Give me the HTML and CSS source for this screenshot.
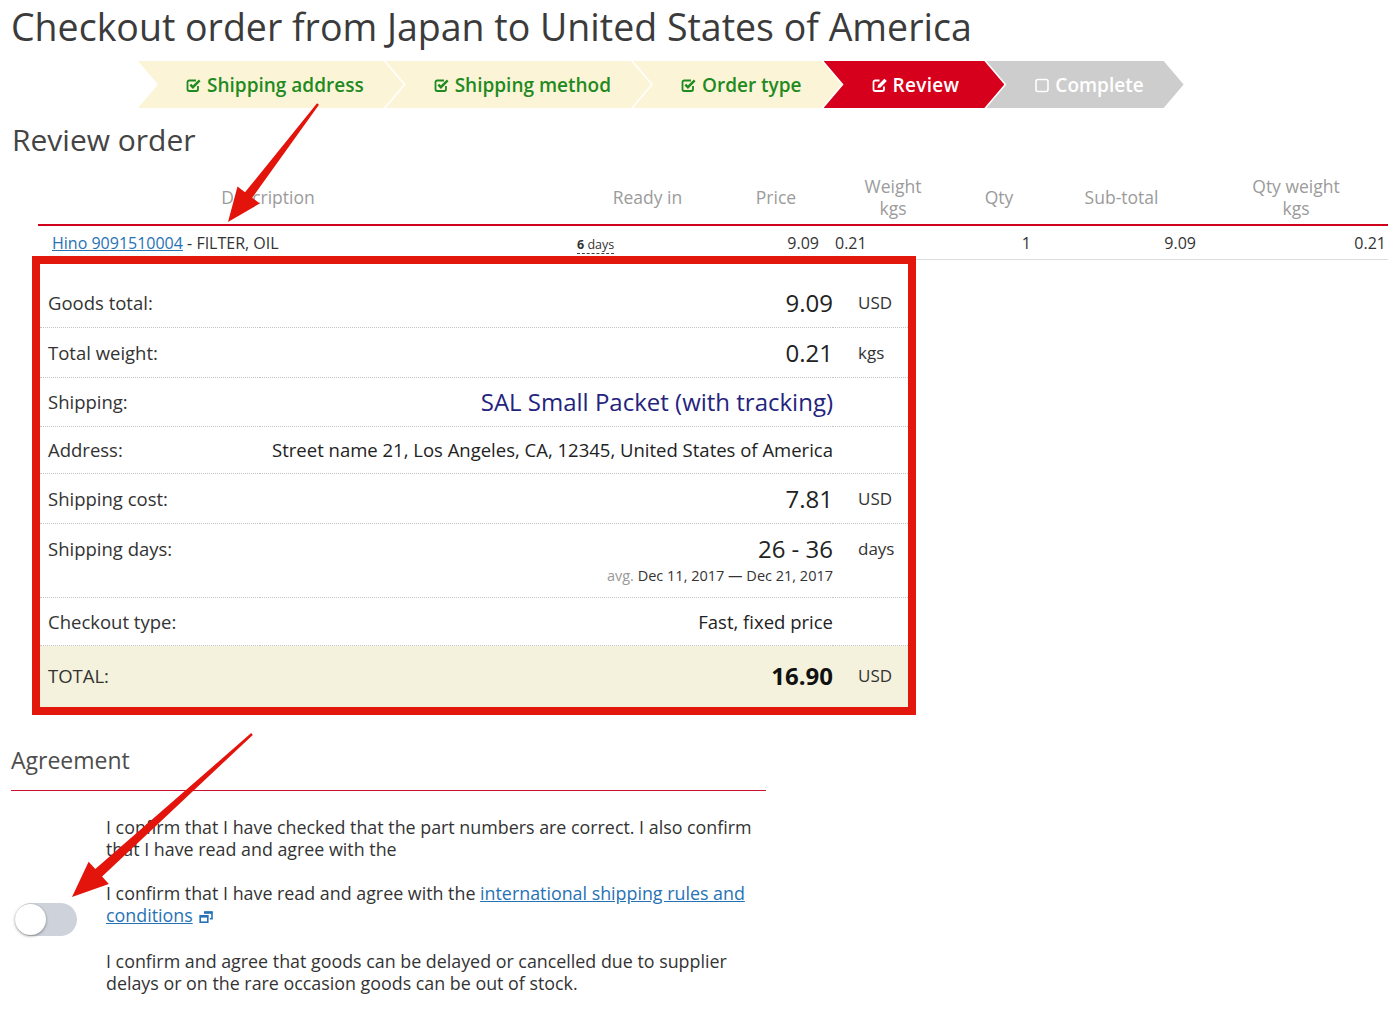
FILE: index.html
```html
<!DOCTYPE html>
<html lang="en">
<head>
<meta charset="utf-8">
<title>Checkout order</title>
<link rel="stylesheet" href="styles.css">
</head>
<body>
<div class="page">
  <h1 class="title">Checkout order from Japan to United States of America</h1>

  <ol class="steps">
    <li class="step done">
      <svg class="ico" viewBox="0 0 16 16" width="16" height="16"><path d="M12 9v3.3A1.7 1.7 0 0 1 10.3 14H3.2A1.7 1.7 0 0 1 1.5 12.3V5.2A1.7 1.7 0 0 1 3.2 3.5H10" fill="none" stroke="currentColor" stroke-width="1.8"/><path d="M4.3 7.6l2.6 2.6 6.8-6.8" fill="none" stroke="currentColor" stroke-width="2.4"/></svg>
      <span>Shipping address</span>
    </li>
    <li class="step done">
      <svg class="ico" viewBox="0 0 16 16" width="16" height="16"><path d="M12 9v3.3A1.7 1.7 0 0 1 10.3 14H3.2A1.7 1.7 0 0 1 1.5 12.3V5.2A1.7 1.7 0 0 1 3.2 3.5H10" fill="none" stroke="currentColor" stroke-width="1.8"/><path d="M4.3 7.6l2.6 2.6 6.8-6.8" fill="none" stroke="currentColor" stroke-width="2.4"/></svg>
      <span>Shipping method</span>
    </li>
    <li class="step done">
      <svg class="ico" viewBox="0 0 16 16" width="16" height="16"><path d="M12 9v3.3A1.7 1.7 0 0 1 10.3 14H3.2A1.7 1.7 0 0 1 1.5 12.3V5.2A1.7 1.7 0 0 1 3.2 3.5H10" fill="none" stroke="currentColor" stroke-width="1.8"/><path d="M4.3 7.6l2.6 2.6 6.8-6.8" fill="none" stroke="currentColor" stroke-width="2.4"/></svg>
      <span>Order type</span>
    </li>
    <li class="step current">
      <svg class="ico" viewBox="0 0 16 16" width="16" height="16"><path d="M12 9.5v2.8A1.7 1.7 0 0 1 10.3 14H3.2A1.7 1.7 0 0 1 1.5 12.3V5.2A1.7 1.7 0 0 1 3.2 3.5H7.5" fill="none" stroke="currentColor" stroke-width="1.8"/><path d="M5.5 11l0.6-3 6.3-6.3 2.4 2.4-6.3 6.3z" fill="currentColor"/></svg>
      <span>Review</span>
    </li>
    <li class="step todo">
      <svg class="ico" viewBox="0 0 16 16" width="16" height="16"><rect x="2" y="2.5" width="12" height="12" rx="2" fill="none" stroke="currentColor" stroke-width="1.6"/></svg>
      <span>Complete</span>
    </li>
  </ol>

  <h2 class="section-title">Review order</h2>

  <table class="items">
    <colgroup>
      <col class="w-desc"><col class="w-ready"><col class="w-price"><col class="w-weight"><col class="w-qty"><col class="w-sub"><col class="w-qw">
    </colgroup>
    <thead>
      <tr>
        <th class="h-desc">Description</th>
        <th>Ready in</th>
        <th>Price</th>
        <th>Weight<br>kgs</th>
        <th>Qty</th>
        <th>Sub-total</th>
        <th>Qty weight<br>kgs</th>
      </tr>
    </thead>
    <tbody>
      <tr>
        <td class="d-desc"><a href="#" class="link">Hino 9091510004</a> - FILTER, OIL</td>
        <td class="d-ready"><span class="ready"><b>6</b> days</span></td>
        <td class="d-price">9.09</td>
        <td class="d-weight">0.21</td>
        <td class="d-qty">1</td>
        <td class="d-sub">9.09</td>
        <td class="d-qw">0.21</td>
      </tr>
    </tbody>
  </table>

  <div class="summary-wrap">
    <table class="summary">
      <colgroup><col class="s-label"><col><col class="s-unit"></colgroup>
      <tr class="r-std">
        <td class="lbl">Goods total:</td>
        <td class="val big">9.09</td>
        <td class="unit">USD</td>
      </tr>
      <tr class="r-std">
        <td class="lbl">Total weight:</td>
        <td class="val big">0.21</td>
        <td class="unit">kgs</td>
      </tr>
      <tr class="r-ship">
        <td class="lbl">Shipping:</td>
        <td class="val big method">SAL Small Packet (with tracking)</td>
        <td class="unit"></td>
      </tr>
      <tr class="r-sm">
        <td class="lbl">Address:</td>
        <td class="val">Street name 21, Los Angeles, CA, 12345, United States of America</td>
        <td class="unit"></td>
      </tr>
      <tr class="r-std">
        <td class="lbl">Shipping cost:</td>
        <td class="val big">7.81</td>
        <td class="unit">USD</td>
      </tr>
      <tr class="r-top">
        <td class="lbl">Shipping days:</td>
        <td class="val"><div class="big">26 - 36</div><div class="avg"><span class="muted">avg.</span> Dec 11, 2017 — Dec 21, 2017</div></td>
        <td class="unit">days</td>
      </tr>
      <tr class="r-sm2">
        <td class="lbl">Checkout type:</td>
        <td class="val">Fast, fixed price</td>
        <td class="unit"></td>
      </tr>
      <tr class="r-total">
        <td class="lbl">TOTAL:</td>
        <td class="val big strong">16.90</td>
        <td class="unit">USD</td>
      </tr>
    </table>
  </div>

  <section class="agreement">
    <h2 class="agree-title">Agreement</h2>
    <div class="agree-row first">
      <div class="agree-side"></div>
      <p>I confirm that I have checked that the part numbers are correct. I also confirm that I have read and agree with the</p>
    </div>
    <div class="agree-row">
      <div class="agree-side"><span class="toggle"></span></div>
      <p>I confirm that I have read and agree with the <a href="#" class="link">international shipping rules and conditions</a> <svg class="ext" viewBox="0 0 14 12" width="14" height="12"><path d="M5.2 1h7.8v6.8h-2.2" fill="none" stroke="currentColor" stroke-width="1.6"/><rect x="5" y="0.6" width="8.4" height="2.2" fill="currentColor"/><rect x="1.2" y="4.8" width="7.6" height="6.4" fill="#fff" stroke="currentColor" stroke-width="1.6"/><rect x="0.8" y="4.4" width="8.4" height="2.2" fill="currentColor"/></svg></p>
    </div>
    <div class="agree-row last">
      <div class="agree-side"></div>
      <p>I confirm and agree that goods can be delayed or cancelled due to supplier delays or on the rare occasion goods can be out of stock.</p>
    </div>
  </section>

  <svg class="annot" viewBox="0 0 1400 1011" width="1400" height="1011">
    <polygon points="318.95,104.73 252.2,197.7 259.7,203.5 228,222 237.5,186.5 245.0,192.3 317.05,103.27" fill="#e3140c"/>
    <polygon points="252.8,734.9 102.1,876.5 108.8,883.9 72,897 88.6,861.7 95.3,869.1 251.2,733.1" fill="#e3140c"/>
  </svg>
</div>
</body>
</html>
```

FILE: styles.css
```css
* { box-sizing: border-box; }

html, body {
  margin: 0;
  padding: 0;
  background: #fff;
}

body {
  font-family: "Open Sans", "Liberation Sans", sans-serif;
  color: #333;
}

.page {
  position: relative;
  width: 1400px;
  height: 1011px;
  overflow: hidden;
  padding-left: 11px;
}

.title {
  margin: 5px 0 0;
  font-size: 37.5px;
  font-weight: 400;
  line-height: 43px;
  color: #3b3b3b;
  white-space: nowrap;
}

/* Steps */
.steps {
  display: flex;
  list-style: none;
  margin: 13px 0 0 127px;
  padding: 0;
  height: 47px;
}

.step {
  display: flex;
  align-items: center;
  gap: 5px;
  height: 47px;
  padding: 0 40px 0 48px;
  font-size: 19px;
  font-weight: 600;
  white-space: nowrap;
  clip-path: polygon(0 0, calc(100% - 20px) 0, 100% 50%, calc(100% - 20px) 100%, 0 100%, 20px 50%);
}

.step + .step { margin-left: -18px; }

.step.done { background: #fcf4d6; color: #1f8a1f; }
.step.current { background: #d6001c; color: #fff; padding-right: 45px; letter-spacing: 0.3px; }
.step.todo { background: #cdcdcd; color: #fff; padding-right: 40px; }

.ico { flex: none; }

/* Review order */
.section-title {
  margin: 14px 0 0 1px;
  font-size: 30px;
  font-weight: 400;
  line-height: 36px;
  color: #444;
}

.items {
  margin: 10px 0 0 27px;
  width: 1350px;
  border-collapse: separate;
  border-spacing: 0;
  table-layout: fixed;
}

.w-desc { width: 532px; }
.w-ready { width: 155px; }
.w-price { width: 102px; }
.w-weight { width: 132px; }
.w-qty { width: 80px; }
.w-sub { width: 165px; }
.w-qw { width: 184px; }

.items th {
  font-weight: 400;
  font-size: 17.5px;
  line-height: 22px;
  color: #9b9b9b;
  padding: 7px 0 5px;
  text-align: center;
  vertical-align: middle;
  border-bottom: 2px solid #d0021b;
}

.items th.h-desc { padding-right: 72px; }

.items td {
  height: 34px;
  font-size: 16px;
  line-height: 23px;
  padding: 6px 8px 4px;
  border-bottom: 1px solid #ddd;
  vertical-align: middle;
  color: #333;
  white-space: nowrap;
}

.items td.d-desc { padding-left: 14px; }
.items td.d-ready { padding-left: 7px; text-align: left; }
.items td.d-price { text-align: right; padding-right: 8px; }
.items td.d-weight { text-align: left; padding-left: 8px; }
.items td.d-qty { text-align: right; padding-right: 8px; }
.items td.d-sub { text-align: right; padding-right: 8px; }
.items td.d-qw { text-align: right; padding-right: 2px; }

.link {
  color: #2672b5;
  text-decoration: underline;
}

.ready {
  font-size: 12.5px;
  border-bottom: 1px dashed #444;
  line-height: 14px;
}

/* Summary */
.summary-wrap {
  margin: 4px 0 0 29px;
  width: 868px;
  padding-top: 14px;
  outline: 8px solid #e2180c;
  background: #fff;
}

.summary {
  width: 100%;
  border-collapse: separate;
  border-spacing: 0;
  table-layout: fixed;
}

.s-label { width: 220px; }
.s-unit { width: 75px; }

.summary td {
  padding: 12px 0 11px;
  border-bottom: 1px dotted #c4c4c4;
  vertical-align: middle;
  font-size: 18.5px;
  line-height: 26px;
  color: #333;
}

.summary td.lbl { padding-left: 8px; }
.summary td.val { text-align: right; color: #222; white-space: nowrap; }
.summary td.unit { padding-left: 25px; font-size: 17px; color: #333; }

.summary .big { font-size: 24px; }
.summary td.method { color: #24237d; }
.summary td.strong { font-weight: 700; color: #111; }

.summary tr.r-ship td { padding-top: 11px; padding-bottom: 11px; }
.summary tr.r-sm td { padding-top: 10px; padding-bottom: 10px; }
.summary tr.r-sm2 td { padding-top: 11px; padding-bottom: 10px; }
.summary tr.r-top td { vertical-align: top; padding-top: 12px; padding-bottom: 11px; }

.avg {
  margin-top: 4px;
  font-size: 14.5px;
  line-height: 20px;
  color: #333;
}

.muted { color: #999; }

.summary tr.r-total td {
  background: #f4f2dc;
  border-bottom: none;
  padding-top: 17px;
  padding-bottom: 18px;
}

/* Agreement */
.agreement { margin-top: 38px; }

.agree-title {
  margin: 0;
  width: 755px;
  font-size: 23px;
  font-weight: 400;
  line-height: 30px;
  color: #4d4d4d;
  padding-bottom: 15px;
  border-bottom: 1px solid #cc1030;
}

.agree-row {
  display: grid;
  grid-template-columns: 95px 660px;
  margin-top: 22px;
}

.agree-row.first { margin-top: 25px; }
.agree-row.last { margin-top: 24px; }

.agree-side {
  height: 0;
  overflow: visible;
}

.agree-row p {
  margin: 0;
  font-size: 17.85px;
  line-height: 22px;
  color: #333;
}

.toggle {
  display: block;
  position: relative;
  width: 62px;
  height: 33px;
  margin: 21px 0 0 4px;
  border-radius: 17px;
  background: #cdd2db;
}

.toggle::after {
  content: "";
  position: absolute;
  left: 0;
  top: 1px;
  width: 31px;
  height: 31px;
  border-radius: 50%;
  background: #fff;
  box-shadow: 0 1px 3px rgba(0, 0, 0, 0.4);
}

.ext {
  color: #2672b5;
  vertical-align: -1px;
  margin-left: 2px;
}

.annot {
  position: absolute;
  left: 0;
  top: 0;
  pointer-events: none;
}
```
